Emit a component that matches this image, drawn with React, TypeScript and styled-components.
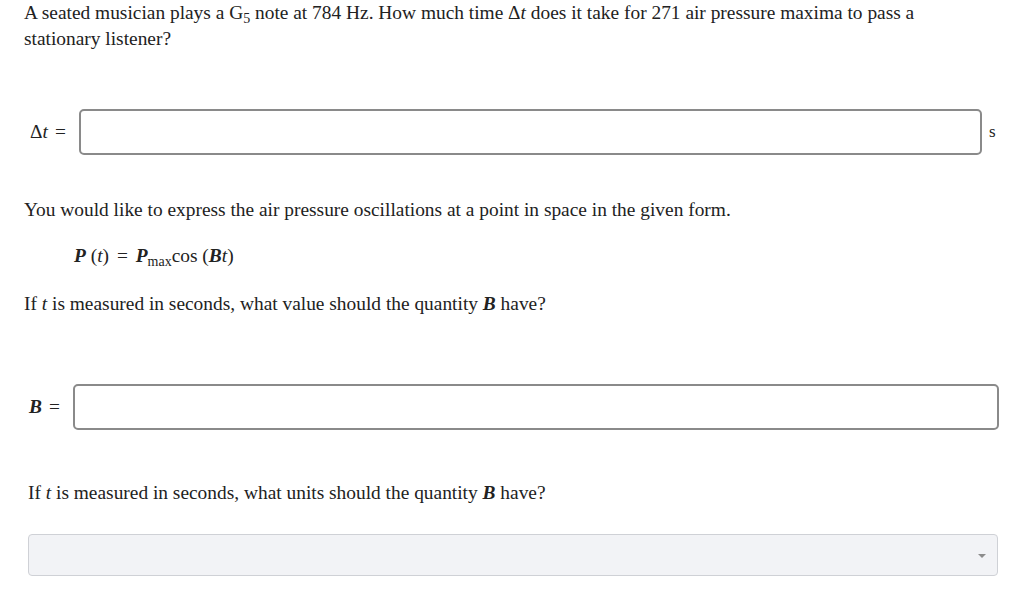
import React from "react";
import styled, { createGlobalStyle } from "styled-components";

const Global = createGlobalStyle`
  html, body { margin: 0; padding: 0; background: #fff; }
  body {
    font-family: "Liberation Serif", "Times New Roman", serif;
    font-size: 19.4px;
    color: #222;
  }
`;

const Page = styled.div`
  width: 1024px;
  padding: 0 0 0 24px;
  box-sizing: border-box;
`;

const Para = styled.p<{ $top?: number; $left?: number }>`
  margin: ${(p) => p.$top ?? 0}px 0 0 ${(p) => p.$left ?? 0}px;
  line-height: 26px;
  width: 930px;
`;

const I = styled.i`
  font-style: italic;
`;

const BI = styled.b`
  font-style: italic;
  font-weight: bold;
`;

const Sub = styled.sub`
  font-size: 14px;
  vertical-align: -4px;
  line-height: 0;
`;

const AnswerRow = styled.div<{ $top: number; $labelLeft: number; $labelWidth: number; $width: number }>`
  display: flex;
  align-items: center;
  margin-top: ${(p) => p.$top}px;
  padding-left: ${(p) => p.$labelLeft}px;
  width: ${(p) => p.$width}px;
  & > span:first-child {
    width: ${(p) => p.$labelWidth}px;
    flex: none;
  }
`;

const Label = styled.span`
  white-space: nowrap;
`;

const Eq = styled.span`
  margin-left: 7px;
`;

const TextInput = styled.input`
  flex: 1;
  height: 46px;
  box-sizing: border-box;
  border: 2px solid #8a8a8a;
  border-radius: 5px;
  background: #fff;
  outline: none;
  font-family: inherit;
  font-size: 16px;
  padding: 0 8px;
`;

const Unit = styled.span`
  margin-left: 7px;
  font-size: 17px;
  width: 17px;
`;

const Formula = styled.div`
  margin: 20px 0 0 50px;
  line-height: 26px;
`;

const Op = styled.span`
  margin: 0 3px;
`;

const Select = styled.div`
  margin: 28px 0 0 4px;
  width: 970px;
  height: 42px;
  box-sizing: border-box;
  border: 1px solid #cfd1d6;
  border-radius: 4px;
  background: #f2f3f6;
  display: flex;
  align-items: center;
  justify-content: flex-end;
  padding-right: 11px;
`;

const Caret = styled.span`
  width: 0;
  height: 0;
  border-left: 4px solid transparent;
  border-right: 4px solid transparent;
  border-top: 4px solid #8c8c8c;
  margin-top: 2px;
`;

export default function App() {
  return (
    <>
      <Global />
      <Page>
        <Para>
          A seated musician plays a G<Sub>5</Sub> note at 784&nbsp;Hz. How much time Δ<I>t</I> does it take
          for 271 air pressure maxima to pass a stationary listener?
        </Para>

        <AnswerRow $top={57} $labelLeft={6} $labelWidth={49} $width={976}>
          <Label>
            Δ<I>t</I>
            <Eq>=</Eq>
          </Label>
          <TextInput type="text" />
          <Unit>s</Unit>
        </AnswerRow>

        <Para $top={42}>
          You would like to express the air pressure oscillations at a point in space in the given form.
        </Para>

        <Formula>
          <BI>P</BI>&nbsp;(<I>t</I>)&nbsp;<Op>=</Op>&nbsp;<BI>P</BI>
          <Sub>max</Sub>cos&nbsp;(<BI>B</BI><I>t</I>)
        </Formula>

        <Para $top={22}>
          If <I>t</I> is measured in seconds, what value should the quantity <BI>B</BI> have?
        </Para>

        <AnswerRow $top={67} $labelLeft={5} $labelWidth={44} $width={970}>
          <Label>
            <BI>B</BI>
            <Eq>=</Eq>
          </Label>
          <TextInput type="text" />
        </AnswerRow>

        <Para $top={50} $left={4}>
          If <I>t</I> is measured in seconds, what units should the quantity <BI>B</BI> have?
        </Para>

        <Select>
          <Caret />
        </Select>
      </Page>
    </>
  );
}
